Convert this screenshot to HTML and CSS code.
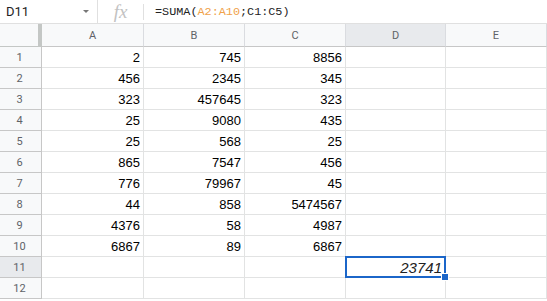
FILE: index.html
```html
<!DOCTYPE html>
<html lang="es">
<head>
  <meta charset="UTF-8">
  <title>Hoja de cálculo</title>
  <link rel="stylesheet" href="styles.css">
</head>
<body>
  <div class="formula-bar">
    <div class="name-box">
      <span class="cell-ref">D11</span>
      <span class="arrow"></span>
    </div>
    <div class="fx">fx</div>
    <div class="formula">=SUMA(<span class="ref-a">A2:A10</span>;C1:C5)</div>
  </div>

  <div class="grid">
    <div class="corner"></div>
    <div class="col-head">A</div>
    <div class="col-head">B</div>
    <div class="col-head">C</div>
    <div class="col-head active">D</div>
    <div class="col-head">E</div>

    <div class="row-head">1</div><div class="cell">2</div><div class="cell">745</div><div class="cell">8856</div><div class="cell"></div><div class="cell"></div>
    <div class="row-head">2</div><div class="cell">456</div><div class="cell">2345</div><div class="cell">345</div><div class="cell"></div><div class="cell"></div>
    <div class="row-head">3</div><div class="cell">323</div><div class="cell">457645</div><div class="cell">323</div><div class="cell"></div><div class="cell"></div>
    <div class="row-head">4</div><div class="cell">25</div><div class="cell">9080</div><div class="cell">435</div><div class="cell"></div><div class="cell"></div>
    <div class="row-head">5</div><div class="cell">25</div><div class="cell">568</div><div class="cell">25</div><div class="cell"></div><div class="cell"></div>
    <div class="row-head">6</div><div class="cell">865</div><div class="cell">7547</div><div class="cell">456</div><div class="cell"></div><div class="cell"></div>
    <div class="row-head">7</div><div class="cell">776</div><div class="cell">79967</div><div class="cell">45</div><div class="cell"></div><div class="cell"></div>
    <div class="row-head">8</div><div class="cell">44</div><div class="cell">858</div><div class="cell">5474567</div><div class="cell"></div><div class="cell"></div>
    <div class="row-head">9</div><div class="cell">4376</div><div class="cell">58</div><div class="cell">4987</div><div class="cell"></div><div class="cell"></div>
    <div class="row-head">10</div><div class="cell">6867</div><div class="cell">89</div><div class="cell">6867</div><div class="cell"></div><div class="cell"></div>
    <div class="row-head active">11</div><div class="cell"></div><div class="cell"></div><div class="cell"></div><div class="cell selected"><span class="result">23741</span><span class="handle"></span></div><div class="cell"></div>
    <div class="row-head">12</div><div class="cell"></div><div class="cell"></div><div class="cell"></div><div class="cell"></div><div class="cell"></div>
  </div>
</body>
</html>
```

FILE: styles.css
```css
body { margin: 0; background: #fff; font-family: "Liberation Sans", Arial, sans-serif; overflow: hidden; }

.formula-bar {
  display: flex;
  align-items: center;
  height: 24px;
  border-bottom: 1px solid #e0e0e0;
  box-sizing: border-box;
}
.name-box {
  width: 98px;
  height: 100%;
  display: flex;
  align-items: center;
  justify-content: space-between;
  padding: 0 6px 0 6px;
  box-sizing: border-box;
  border-right: 1px solid #e0e0e0;
}
.cell-ref { font-family: Roboto, sans-serif; font-size: 13px; color: #222; }
.arrow {
  width: 0;
  height: 0;
  border-left: 3px solid transparent;
  border-right: 3px solid transparent;
  border-top: 3px solid #777;
  margin-right: 2px;
}
.fx {
  width: 45px;
  height: 16px;
  display: flex;
  align-items: center;
  justify-content: center;
  font-family: "Liberation Serif", serif;
  font-style: italic;
  font-size: 19px;
  color: #c2c2c2;
  border-right: 1px solid #e0e0e0;
}
.formula {
  padding-left: 11px;
  font-family: "Liberation Mono", monospace;
  font-size: 11.8px;
  color: #222;
}
.ref-a { color: #f0a24a; }

.grid {
  display: grid;
  grid-template-columns: 42px 102px 101px 101px 100px 101px;
  grid-template-rows: 23px repeat(12, 21px);
}
.grid > div {
  box-sizing: border-box;
  border-right: 1px solid #e2e3e3;
  border-bottom: 1px solid #e2e3e3;
}
.corner {
  background: #f8f9fa;
  border-right: 4px solid #c4c7c5 !important;
  border-bottom-color: #c4c7c5 !important;
}
.col-head, .row-head {
  background: #f8f9fa;
  color: #5f6368;
  font-family: Roboto, sans-serif;
  font-size: 11px;
  display: flex;
  align-items: center;
  justify-content: center;
  border-color: #c7c7c7 !important;
}
.col-head { border-right-color: #dadce0 !important; }
.row-head { padding-right: 2px; }
.col-head.active, .row-head.active { background: #e8eaed; }

.cell {
  display: flex;
  align-items: center;
  justify-content: flex-end;
  padding-right: 3px;
  font-size: 13px;
  color: #000;
}
.cell.selected { position: relative; }
.cell.selected::after {
  content: "";
  position: absolute;
  left: -1px;
  top: -1px;
  right: -1px;
  bottom: -1px;
  border: 2px solid #1b66c9;
}
.result { font-style: italic; font-size: 15px; color: #222; }
.handle {
  position: absolute;
  right: -4px;
  bottom: -4px;
  width: 6px;
  height: 6px;
  background: #1b66c9;
  border: 1px solid #fff;
  z-index: 1;
}
```
